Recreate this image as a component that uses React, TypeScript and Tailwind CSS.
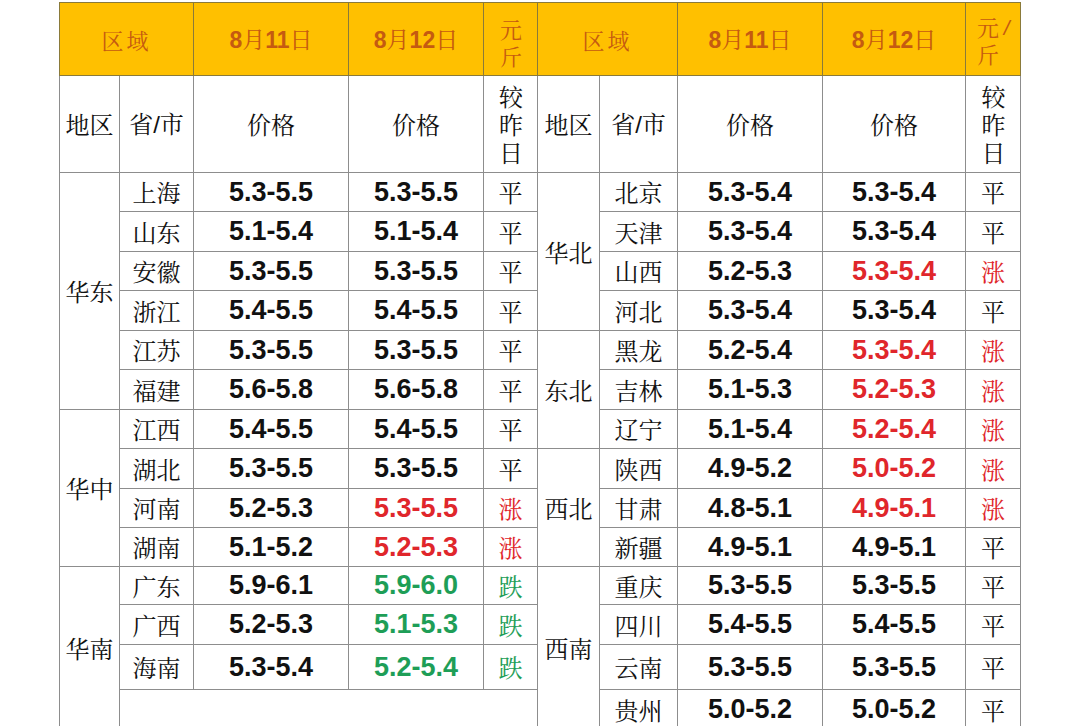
import React from "react";

type Row = { p: string; a: string; b: string; c: string; color?: "red" | "green" };

const left: Row[] = [
  { p: "上海", a: "5.3-5.5", b: "5.3-5.5", c: "平" },
  { p: "山东", a: "5.1-5.4", b: "5.1-5.4", c: "平" },
  { p: "安徽", a: "5.3-5.5", b: "5.3-5.5", c: "平" },
  { p: "浙江", a: "5.4-5.5", b: "5.4-5.5", c: "平" },
  { p: "江苏", a: "5.3-5.5", b: "5.3-5.5", c: "平" },
  { p: "福建", a: "5.6-5.8", b: "5.6-5.8", c: "平" },
  { p: "江西", a: "5.4-5.5", b: "5.4-5.5", c: "平" },
  { p: "湖北", a: "5.3-5.5", b: "5.3-5.5", c: "平" },
  { p: "河南", a: "5.2-5.3", b: "5.3-5.5", c: "涨", color: "red" },
  { p: "湖南", a: "5.1-5.2", b: "5.2-5.3", c: "涨", color: "red" },
  { p: "广东", a: "5.9-6.1", b: "5.9-6.0", c: "跌", color: "green" },
  { p: "广西", a: "5.2-5.3", b: "5.1-5.3", c: "跌", color: "green" },
  { p: "海南", a: "5.3-5.4", b: "5.2-5.4", c: "跌", color: "green" },
];

const right: Row[] = [
  { p: "北京", a: "5.3-5.4", b: "5.3-5.4", c: "平" },
  { p: "天津", a: "5.3-5.4", b: "5.3-5.4", c: "平" },
  { p: "山西", a: "5.2-5.3", b: "5.3-5.4", c: "涨", color: "red" },
  { p: "河北", a: "5.3-5.4", b: "5.3-5.4", c: "平" },
  { p: "黑龙", a: "5.2-5.4", b: "5.3-5.4", c: "涨", color: "red" },
  { p: "吉林", a: "5.1-5.3", b: "5.2-5.3", c: "涨", color: "red" },
  { p: "辽宁", a: "5.1-5.4", b: "5.2-5.4", c: "涨", color: "red" },
  { p: "陕西", a: "4.9-5.2", b: "5.0-5.2", c: "涨", color: "red" },
  { p: "甘肃", a: "4.8-5.1", b: "4.9-5.1", c: "涨", color: "red" },
  { p: "新疆", a: "4.9-5.1", b: "4.9-5.1", c: "平" },
  { p: "重庆", a: "5.3-5.5", b: "5.3-5.5", c: "平" },
  { p: "四川", a: "5.4-5.5", b: "5.4-5.5", c: "平" },
  { p: "云南", a: "5.3-5.5", b: "5.3-5.5", c: "平" },
  { p: "贵州", a: "5.0-5.2", b: "5.0-5.2", c: "平" },
];

const leftRegions: Record<number, [string, number]> = { 0: ["华东", 6], 6: ["华中", 4], 10: ["华南", 4] };
const rightRegions: Record<number, [string, number]> = { 0: ["华北", 4], 4: ["东北", 3], 7: ["西北", 3], 10: ["西南", 4] };

const rowH = [
  "h-[39px]", "h-[40px]", "h-[39px]", "h-[40px]", "h-[39px]", "h-[40px]", "h-[39px]",
  "h-[40px]", "h-[39px]", "h-[39px]", "h-[38px]", "h-[40px]", "h-[45px]", "h-[40px]",
];

const cjk = "font-['Noto_Serif_CJK_SC','Noto_Sans_CJK_SC',serif]";
const cell = "border border-[#8d8d8d] p-0 text-center align-middle";
const hcell = "border border-[#8a7a3a] p-0 text-center align-middle";
const num = "font-['Liberation_Sans',Arial,sans-serif] font-bold text-[27px] leading-none";
const arial = "font-['Liberation_Sans',Arial,sans-serif]";
const vert = "block [writing-mode:vertical-rl] [text-orientation:upright] leading-none";

function priceColor(c?: "red" | "green") {
  if (c === "red") return "text-[#e0262b]";
  if (c === "green") return "text-[#1e9e57]";
  return "text-[#111111]";
}

function Cells({ r }: { r: Row }) {
  return (
    <>
      <td className={`${cell} ${cjk} text-[24px] leading-none text-[#111]`}>{r.p}</td>
      <td className={`${cell} ${num} text-[#111111]`}>{r.a}</td>
      <td className={`${cell} ${num} ${priceColor(r.color)}`}>{r.b}</td>
      <td className={`${cell} ${cjk} text-[24px] leading-none ${priceColor(r.color)}`}>{r.c}</td>
    </>
  );
}

function DateHead({ d }: { d: string }) {
  return (
    <th className={`${hcell} text-[23px] font-normal leading-none text-[#c55a11]`}>
      <span className={`${arial} font-bold`}>8</span>
      <span className={cjk}>月</span>
      <span className={`${arial} font-bold`}>{d}</span>
      <span className={cjk}>日</span>
    </th>
  );
}

export default function App() {
  return (
    <div className="w-[1080px] h-[726px] overflow-hidden bg-white pl-[59px] pt-[2px]">
      <table className="border-collapse table-fixed w-[961px]">
        <colgroup>
          <col className="w-[60px]" />
          <col className="w-[74px]" />
          <col className="w-[155px]" />
          <col className="w-[135px]" />
          <col className="w-[54px]" />
          <col className="w-[62px]" />
          <col className="w-[78px]" />
          <col className="w-[145px]" />
          <col className="w-[143px]" />
          <col className="w-[55px]" />
        </colgroup>
        <thead>
          <tr className="h-[73px] bg-[#ffc000]">
            <th colSpan={2} className={`${hcell} ${cjk} text-[22px] font-normal tracking-[3px] text-[#c55a11]`}>区域</th>
            <DateHead d="11" />
            <DateHead d="12" />
            <th className={`${hcell} ${cjk} text-[22px] font-normal text-[#c55a11]`}>
              <div className="flex justify-center">
                <span className={`${vert} tracking-[5px] mt-[14px]`}>元斤</span>
              </div>
            </th>
            <th colSpan={2} className={`${hcell} ${cjk} text-[22px] font-normal tracking-[3px] text-[#c55a11]`}>区域</th>
            <DateHead d="11" />
            <DateHead d="12" />
            <th className={`${hcell} ${cjk} text-[22px] font-normal text-[#c55a11]`}>
              <div className="flex justify-center">
                <div className="relative pr-[11px] mt-[10px]">
                  <span className={`${vert} tracking-[5px]`}>元斤</span>
                  <span className={`${arial} absolute right-0 top-0 text-[21px] leading-none italic`}>/</span>
                </div>
              </div>
            </th>
          </tr>
        </thead>
        <tbody>
          <tr className="h-[97px]">
            {[0, 1].map((k) => (
              <React.Fragment key={k}>
                <td className={`${cell} ${cjk} text-[24px] text-[#111]`}>地区</td>
                <td className={`${cell} ${cjk} text-[24px] text-[#111]`}>
                  省<span className={arial}>/</span>市
                </td>
                <td className={`${cell} ${cjk} text-[24px] text-[#111]`}>价格</td>
                <td className={`${cell} ${cjk} text-[24px] text-[#111]`}>价格</td>
                <td className={`${cell} ${cjk} text-[24px] text-[#111]`}>
                  <div className="flex justify-center">
                    <span className={`${vert} tracking-[4px] mt-[6px]`}>较昨日</span>
                  </div>
                </td>
              </React.Fragment>
            ))}
          </tr>
          {rowH.map((h, i) => (
            <tr key={i} className={h}>
              {leftRegions[i] && (
                <td rowSpan={leftRegions[i][1]} className={`${cell} ${cjk} text-[24px] text-[#111]`}>
                  {leftRegions[i][0]}
                </td>
              )}
              {i < left.length ? <Cells r={left[i]} /> : <td colSpan={4} className={cell}></td>}
              {rightRegions[i] && (
                <td rowSpan={rightRegions[i][1]} className={`${cell} ${cjk} text-[24px] text-[#111]`}>
                  {rightRegions[i][0]}
                </td>
              )}
              <Cells r={right[i]} />
            </tr>
          ))}
        </tbody>
      </table>
    </div>
  );
}
